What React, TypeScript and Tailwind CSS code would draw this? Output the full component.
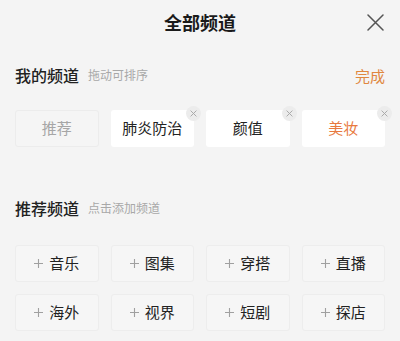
import React from "react";

const font = { fontFamily: '"Noto Sans CJK SC", "Noto Sans", sans-serif' };

function Badge() {
  return (
    <span className="absolute -right-[7px] -top-[4px] w-[15px] h-[15px] rounded-full bg-[#ececec] flex items-center justify-center">
      <svg width="7" height="7" viewBox="0 0 8 8">
        <path d="M1 1L7 7M7 1L1 7" stroke="#a8a8a8" strokeWidth="1.1" strokeLinecap="round" />
      </svg>
    </span>
  );
}

function Plus() {
  return (
    <svg className="mr-[6px]" width="9" height="9" viewBox="0 0 9 9">
      <path d="M4.5 0V9M0 4.5H9" stroke="#a0a0a0" strokeWidth="1.1" />
    </svg>
  );
}

export default function App() {
  const mine = ["肺炎防治", "颜值", "美妆"];
  const rec = ["音乐", "图集", "穿搭", "直播", "海外", "视界", "短剧", "探店"];
  return (
    <div className="w-[400px] h-[341px] bg-[#f4f4f4] overflow-hidden flex flex-col" style={font}>
      <div className="relative h-[44px] flex items-center justify-center">
        <span className="text-[18px] font-bold text-[#1a1a1a] leading-none">全部频道</span>
        <svg className="absolute left-[367px] top-[14px]" width="17" height="17" viewBox="0 0 17 17">
          <path d="M1 1L16 16M16 1L1 16" stroke="#555" strokeWidth="1.5" strokeLinecap="round" />
        </svg>
      </div>
      <div className="mt-[19px] h-[24px] px-[15px] flex items-center">
        <span className="text-[16px] font-medium text-[#222] leading-none">我的频道</span>
        <span className="ml-[9px] text-[12px] text-[#a8a8a8] leading-none">拖动可排序</span>
        <span className="ml-auto text-[15px] text-[#e0873f] leading-none">完成</span>
      </div>
      <div className="mt-[23px] px-[15px] grid grid-cols-4 gap-x-[12px]">
        <div className="h-[37px] rounded-[3px] border border-[#ececec] bg-[#f5f5f5] flex items-center justify-center text-[15px] text-[#a6a6a6]">
          推荐
        </div>
        {mine.map((t, i) => (
          <div
            key={t}
            className={`relative h-[37px] rounded-[3px] bg-white flex items-center justify-center text-[15px] ${
              i === 2 ? "text-[#e8793e]" : "text-[#222]"
            }`}
          >
            {t}
            <Badge />
          </div>
        ))}
      </div>
      <div className="mt-[49px] h-[24px] px-[15px] flex items-center">
        <span className="text-[16px] font-medium text-[#222] leading-none">推荐频道</span>
        <span className="ml-[9px] text-[12px] text-[#a8a8a8] leading-none">点击添加频道</span>
      </div>
      <div className="mt-[25px] px-[15px] grid grid-cols-4 gap-x-[12px] gap-y-[12px]">
        {rec.map((t) => (
          <div
            key={t}
            className="h-[37px] rounded-[3px] border border-[#ededed] bg-[#f6f6f6] flex items-center justify-center text-[15px] text-[#222]"
          >
            <Plus />
            {t}
          </div>
        ))}
      </div>
    </div>
  );
}
